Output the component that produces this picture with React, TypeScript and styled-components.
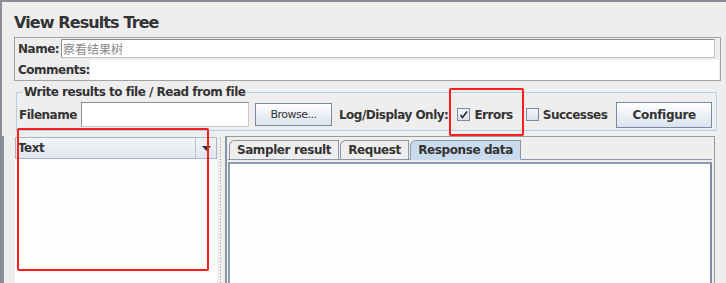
import React from "react";
import styled, { createGlobalStyle } from "styled-components";

const Global = createGlobalStyle`
  html, body { margin: 0; padding: 0; background: #eeeeee; }
  body { font-family: "DejaVu Sans", "Noto Sans CJK SC", sans-serif; color: #333333; }
  * { box-sizing: border-box; }
`;

const Frame = styled.div`
  position: relative;
  width: 726px;
  height: 283px;
  overflow: hidden;
  background: #eeeeee;
  border-top: 2px solid #8b8c96;
  border-left: 2px solid #8b8c96;
  display: flex;
  flex-direction: column;
`;

const Title = styled.div`
  margin: 10px 0 0 12px;
  height: 24px;
  font-size: 16px;
  letter-spacing: -0.9px;
  font-weight: bold;
  color: #333;
  line-height: 22px;
`;

const NameBox = styled.div`
  margin: 1px 5px 0 12px;
  border: 1px solid #a3a3a3;
  display: flex;
  flex-direction: column;
  height: 44px;
`;

const NameRow = styled.div`
  display: flex;
  align-items: center;
  height: 21px;
  padding-left: 3px;
`;

const Label = styled.span<{ $ml?: number }>`
  font-size: 12px;
  letter-spacing: -0.5px;
  font-weight: bold;
  color: #333;
  white-space: nowrap;
  margin-left: ${(p) => p.$ml ?? 0}px;
`;

const NameInput = styled.div`
  margin-left: 2px;
  flex: 1;
  height: 19px;
  margin-right: 5px;
  background: #fff;
  border: 1px solid #8e8e8e;
  border-right-color: #c0c0c0;
  border-bottom-color: #c0c0c0;
  font-size: 12px;
  color: #8a8a8a;
  line-height: 17px;
  padding-left: 1px;
  font-family: "Noto Sans CJK SC", sans-serif;
`;

const CommentsField = styled.div`
  margin-left: 0;
  flex: 1;
  height: 20px;
  background: #fff;
  margin-right: 1px;
`;

const Group = styled.fieldset`
  margin: 4px 9px 0 14px;
  padding: 0 4px 3px 2px;
  border: 1px solid #b8cfe5;
  height: 46px;
  min-width: 0;
`;

const Legend = styled.legend`
  padding: 0 2px;
  margin-left: 3px;
  font-size: 12px;
  letter-spacing: -0.5px;
  font-weight: bold;
  color: #333;
`;

const GroupRow = styled.div`
  display: flex;
  align-items: center;
  height: 27px;
  margin-top: 2px;
`;

const TextInput = styled.div<{ $w: number }>`
  width: ${(p) => p.$w}px;
  height: 25px;
  margin-left: 4px;
  background: #fff;
  border: 1px solid #8e8e8e;
  border-right-color: #c8c8c8;
  border-bottom-color: #c8c8c8;
`;

const Button = styled.div<{ $w: number; $bold?: boolean; $h: number; $ml: number }>`
  width: ${(p) => p.$w}px;
  height: ${(p) => p.$h}px;
  margin-left: ${(p) => p.$ml}px;
  border: 1px solid #7a8a9f;
  background: linear-gradient(#ffffff 0%, #f2f5f9 35%, #dae3ee 100%);
  display: flex;
  align-items: center;
  justify-content: center;
  font-size: ${(p) => (p.$bold ? 12 : 11)}px;
  letter-spacing: ${(p) => (p.$bold ? -0.3 : -0.5)}px;
  font-weight: ${(p) => (p.$bold ? "bold" : "normal")};
  color: #333;
`;

const CheckLabel = styled.div<{ $ml: number }>`
  display: flex;
  align-items: center;
  margin-left: ${(p) => p.$ml}px;
  gap: 4px;
`;

const Box = styled.div`
  width: 13px;
  height: 13px;
  border: 1px solid #7d8a99;
  background: linear-gradient(#f4f6f9, #d9e1ea);
  display: flex;
  align-items: center;
  justify-content: center;
`;

const Bottom = styled.div`
  flex: 1;
  display: flex;
  margin-top: 5px;
  min-height: 0;
`;

const LeftEdge = styled.div`
  width: 2px;
  background: #8892a2;
`;

const LeftPanel = styled.div`
  margin-left: 11px;
  width: 202px;
  display: flex;
  flex-direction: column;
  margin-top: 1px;
`;

const Combo = styled.div`
  height: 22px;
  display: flex;
  border: 1px solid #a9b4c2;
  background: linear-gradient(#f2f4f7, #e2e7ee);
`;

const ComboText = styled.div`
  flex: 1;
  display: flex;
  align-items: center;
  padding-left: 2px;
  font-size: 12px;
  letter-spacing: -0.5px;
  font-weight: bold;
  color: #333;
  border-right: 1px solid #b9c3cf;
`;

const ComboArrow = styled.div`
  width: 20px;
  display: flex;
  align-items: center;
  justify-content: center;
`;

const ListArea = styled.div`
  flex: 1;
  background: #fdfdfd;
`;

const Splitter = styled.div`
  width: 8px;
  display: flex;
  justify-content: center;
  padding-top: 1px;
`;

const Dots = styled.div`
  width: 4px;
  background-image: radial-gradient(circle, #9a9a9a 0.7px, transparent 0.9px);
  background-size: 3px 3px;
`;

const RightPanel = styled.div`
  width: 490px;
  border-top: 1px solid #9a9a9a;
  border-right: 1px solid #9a9a9a;
  border-left: 2px solid #8896aa;
  display: flex;
  flex-direction: column;
  padding: 3px 2px 0 1px;
`;

const TabStrip = styled.div`
  display: flex;
  height: 20px;
  align-items: flex-end;
  padding-left: 1px;
  border-bottom: 1px solid #8c96a6;
`;

const Tab = styled.div<{ $active?: boolean; $w: number }>`
  width: ${(p) => p.$w}px;
  height: 20px;
  margin-bottom: -1px;
  margin-right: 1px;
  border: 1px solid #8e96a3;
  border-bottom: ${(p) => (p.$active ? "1px solid #c9dbec" : "1px solid #8c96a6")};
  border-top-left-radius: 6px;
  background: ${(p) => (p.$active ? "#c9dbec" : "#eeeeee")};
  font-size: 12px;
  letter-spacing: -0.4px;
  font-weight: bold;
  color: #333;
  display: flex;
  align-items: center;
  justify-content: center;
`;

const Content = styled.div`
  flex: 1;
  margin-top: 2px;
  border: 2px solid #8b9bb2;
  border-right-color: #7f8ba0;
  border-bottom: none;
  background: #fdfdfd;
`;

const Annot = styled.div<{ $x: number; $y: number; $w: number; $h: number }>`
  position: absolute;
  left: ${(p) => p.$x}px;
  top: ${(p) => p.$y}px;
  width: ${(p) => p.$w}px;
  height: ${(p) => p.$h}px;
  border: 2px solid #ff1c1c;
  border-radius: 2px;
  pointer-events: none;
`;

export default function App() {
  return (
    <>
      <Global />
      <Frame>
        <Title>View Results Tree</Title>
        <NameBox>
          <NameRow>
            <Label>Name:</Label>
            <NameInput>察看结果树</NameInput>
          </NameRow>
          <NameRow>
            <Label>Comments:</Label>
            <CommentsField />
          </NameRow>
        </NameBox>
        <Group>
          <Legend>Write results to file / Read from file</Legend>
          <GroupRow>
            <Label>Filename</Label>
            <TextInput $w={169} />
            <Button $w={77} $h={23} $ml={6}>Browse...</Button>
            <Label $ml={7}>Log/Display Only:</Label>
            <CheckLabel $ml={9}>
              <Box>
                <svg width="9" height="9" viewBox="0 0 9 9">
                  <path d="M1.5 5 L3.5 7.5 L8 1.5" stroke="#222" strokeWidth="1.5" fill="none" />
                </svg>
              </Box>
              <Label>Errors</Label>
            </CheckLabel>
            <CheckLabel $ml={13}>
              <Box />
              <Label>Successes</Label>
            </CheckLabel>
            <Button $w={96} $h={26} $ml={9} $bold>Configure</Button>
          </GroupRow>
        </Group>
        <Bottom>
          <LeftEdge />
          <LeftPanel>
            <Combo>
              <ComboText>Text</ComboText>
              <ComboArrow>
                <svg width="9" height="5" viewBox="0 0 9 5">
                  <path d="M0 0 H9 L4.5 5 Z" fill="#333" />
                </svg>
              </ComboArrow>
            </Combo>
            <ListArea />
          </LeftPanel>
          <Splitter>
            <Dots />
          </Splitter>
          <RightPanel>
            <TabStrip>
              <Tab $w={110}>Sampler result</Tab>
              <Tab $w={69}>Request</Tab>
              <Tab $w={111} $active>Response data</Tab>
            </TabStrip>
            <Content />
          </RightPanel>
        </Bottom>
        <Annot $x={447} $y={86} $w={75} $h={48} />
        <Annot $x={15} $y={126} $w={192} $h={143} />
      </Frame>
    </>
  );
}
